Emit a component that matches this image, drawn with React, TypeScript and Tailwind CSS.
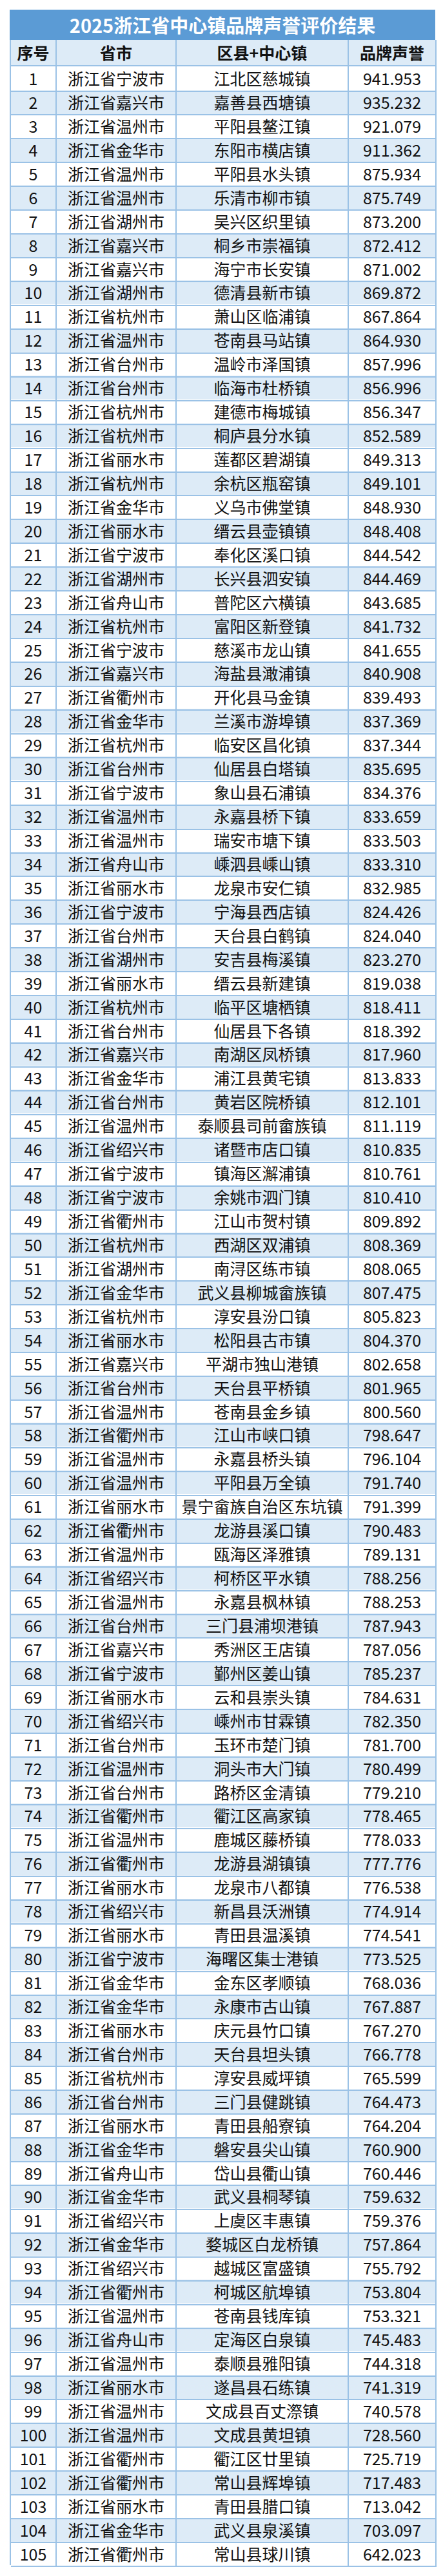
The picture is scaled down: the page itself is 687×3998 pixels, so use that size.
const rows: [string, string, string][] = [
  ['宁波', '江北区慈城镇', '941.953'],
  ['嘉兴', '嘉善县西塘镇', '935.232'],
  ['温州', '平阳县鳌江镇', '921.079'],
  ['金华', '东阳市横店镇', '911.362'],
  ['温州', '平阳县水头镇', '875.934'],
  ['温州', '乐清市柳市镇', '875.749'],
  ['湖州', '吴兴区织里镇', '873.200'],
  ['嘉兴', '桐乡市崇福镇', '872.412'],
  ['嘉兴', '海宁市长安镇', '871.002'],
  ['湖州', '德清县新市镇', '869.872'],
  ['杭州', '萧山区临浦镇', '867.864'],
  ['温州', '苍南县马站镇', '864.930'],
  ['台州', '温岭市泽国镇', '857.996'],
  ['台州', '临海市杜桥镇', '856.996'],
  ['杭州', '建德市梅城镇', '856.347'],
  ['杭州', '桐庐县分水镇', '852.589'],
  ['丽水', '莲都区碧湖镇', '849.313'],
  ['杭州', '余杭区瓶窑镇', '849.101'],
  ['金华', '义乌市佛堂镇', '848.930'],
  ['丽水', '缙云县壶镇镇', '848.408'],
  ['宁波', '奉化区溪口镇', '844.542'],
  ['湖州', '长兴县泗安镇', '844.469'],
  ['舟山', '普陀区六横镇', '843.685'],
  ['杭州', '富阳区新登镇', '841.732'],
  ['宁波', '慈溪市龙山镇', '841.655'],
  ['嘉兴', '海盐县澉浦镇', '840.908'],
  ['衢州', '开化县马金镇', '839.493'],
  ['金华', '兰溪市游埠镇', '837.369'],
  ['杭州', '临安区昌化镇', '837.344'],
  ['台州', '仙居县白塔镇', '835.695'],
  ['宁波', '象山县石浦镇', '834.376'],
  ['温州', '永嘉县桥下镇', '833.659'],
  ['温州', '瑞安市塘下镇', '833.503'],
  ['舟山', '嵊泗县嵊山镇', '833.310'],
  ['丽水', '龙泉市安仁镇', '832.985'],
  ['宁波', '宁海县西店镇', '824.426'],
  ['台州', '天台县白鹤镇', '824.040'],
  ['湖州', '安吉县梅溪镇', '823.270'],
  ['丽水', '缙云县新建镇', '819.038'],
  ['杭州', '临平区塘栖镇', '818.411'],
  ['台州', '仙居县下各镇', '818.392'],
  ['嘉兴', '南湖区凤桥镇', '817.960'],
  ['金华', '浦江县黄宅镇', '813.833'],
  ['台州', '黄岩区院桥镇', '812.101'],
  ['温州', '泰顺县司前畲族镇', '811.119'],
  ['绍兴', '诸暨市店口镇', '810.835'],
  ['宁波', '镇海区澥浦镇', '810.761'],
  ['宁波', '余姚市泗门镇', '810.410'],
  ['衢州', '江山市贺村镇', '809.892'],
  ['杭州', '西湖区双浦镇', '808.369'],
  ['湖州', '南浔区练市镇', '808.065'],
  ['金华', '武义县柳城畲族镇', '807.475'],
  ['杭州', '淳安县汾口镇', '805.823'],
  ['丽水', '松阳县古市镇', '804.370'],
  ['嘉兴', '平湖市独山港镇', '802.658'],
  ['台州', '天台县平桥镇', '801.965'],
  ['温州', '苍南县金乡镇', '800.560'],
  ['衢州', '江山市峡口镇', '798.647'],
  ['温州', '永嘉县桥头镇', '796.104'],
  ['温州', '平阳县万全镇', '791.740'],
  ['丽水', '景宁畲族自治区东坑镇', '791.399'],
  ['衢州', '龙游县溪口镇', '790.483'],
  ['温州', '瓯海区泽雅镇', '789.131'],
  ['绍兴', '柯桥区平水镇', '788.256'],
  ['温州', '永嘉县枫林镇', '788.253'],
  ['台州', '三门县浦坝港镇', '787.943'],
  ['嘉兴', '秀洲区王店镇', '787.056'],
  ['宁波', '鄞州区姜山镇', '785.237'],
  ['丽水', '云和县崇头镇', '784.631'],
  ['绍兴', '嵊州市甘霖镇', '782.350'],
  ['台州', '玉环市楚门镇', '781.700'],
  ['温州', '洞头市大门镇', '780.499'],
  ['台州', '路桥区金清镇', '779.210'],
  ['衢州', '衢江区高家镇', '778.465'],
  ['温州', '鹿城区藤桥镇', '778.033'],
  ['衢州', '龙游县湖镇镇', '777.776'],
  ['丽水', '龙泉市八都镇', '776.538'],
  ['绍兴', '新昌县沃洲镇', '774.914'],
  ['丽水', '青田县温溪镇', '774.541'],
  ['宁波', '海曙区集士港镇', '773.525'],
  ['金华', '金东区孝顺镇', '768.036'],
  ['金华', '永康市古山镇', '767.887'],
  ['丽水', '庆元县竹口镇', '767.270'],
  ['台州', '天台县坦头镇', '766.778'],
  ['杭州', '淳安县威坪镇', '765.599'],
  ['台州', '三门县健跳镇', '764.473'],
  ['丽水', '青田县船寮镇', '764.204'],
  ['金华', '磐安县尖山镇', '760.900'],
  ['舟山', '岱山县衢山镇', '760.446'],
  ['金华', '武义县桐琴镇', '759.632'],
  ['绍兴', '上虞区丰惠镇', '759.376'],
  ['金华', '婺城区白龙桥镇', '757.864'],
  ['绍兴', '越城区富盛镇', '755.792'],
  ['衢州', '柯城区航埠镇', '753.804'],
  ['温州', '苍南县钱库镇', '753.321'],
  ['舟山', '定海区白泉镇', '745.483'],
  ['温州', '泰顺县雅阳镇', '744.318'],
  ['丽水', '遂昌县石练镇', '741.319'],
  ['温州', '文成县百丈漈镇', '740.578'],
  ['温州', '文成县黄坦镇', '728.560'],
  ['衢州', '衢江区廿里镇', '725.719'],
  ['衢州', '常山县辉埠镇', '717.483'],
  ['丽水', '青田县腊口镇', '713.042'],
  ['金华', '武义县泉溪镇', '703.097'],
  ['衢州', '常山县球川镇', '642.023'],
];

const cell = 'flex items-center justify-center border-r-2 border-b-2 border-[#9bc2e6] whitespace-nowrap';

export default function App() {
  return (
    <div className="w-full min-h-[3998px] bg-white pt-[15px] pb-[16px] font-['Noto_Sans_CJK_SC',sans-serif] text-[#111]">
      <div className="ml-[15px] w-[660px]">
        {/* 标题 */}
        <div className="flex h-[47px] items-center justify-center bg-[#5b9bd5] text-[29px] font-bold text-white">
          2025浙江省中心镇品牌声誉评价结果
        </div>

        {/* 表头 */}
        <div className="grid h-[41px] grid-cols-[71px_186px_267px_136px] border-l-2 border-[#9bc2e6] bg-[#ddebf7] text-[25px] font-bold">
          <div className={cell}>序号</div>
          <div className={cell}>省市</div>
          <div className={cell}>区县+中心镇</div>
          <div className={cell}>品牌声誉</div>
        </div>

        {rows.map(([city, town, score], i) => (
          <div
            key={i}
            className={
              'grid h-[36.94px] grid-cols-[71px_186px_267px_136px] border-l-2 border-[#9bc2e6] text-[25px] ' +
              (i % 2 === 1 ? 'bg-[#ddebf7]' : 'bg-white')
            }
          >
            <div className={cell}>{i + 1}</div>
            <div className={cell}>浙江省{city}市</div>
            <div className={cell}>{town}</div>
            <div className={cell}>{score}</div>
          </div>
        ))}
      </div>
    </div>
  );
}
